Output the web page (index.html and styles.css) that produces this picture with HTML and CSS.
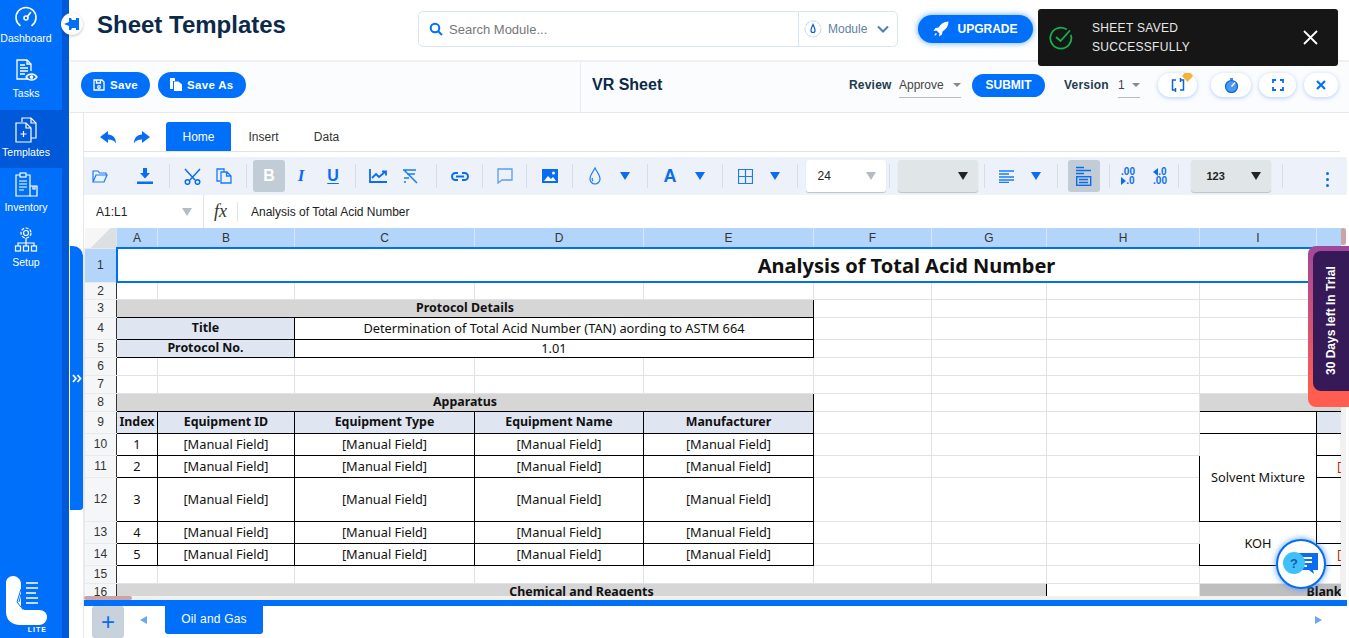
FILE: index.html
```html
<!DOCTYPE html>
<html lang="en">
<head>
    <meta charset="UTF-8">
    <title>Sheet Templates</title>
    <link rel="stylesheet" href="styles.css">
</head>
<body>
<div class="app">
    <nav class="side">
        <a class="nav-item">
            <svg width="24" height="24" viewBox="0 0 24 24" fill="none" stroke="#fff" stroke-width="1.6" stroke-linecap="round"><path d="M6 20.5A10 10 0 1 1 18 20.5"/><circle cx="12" cy="13" r="2"/><path d="M13.5 11.5L16.5 7.5"/></svg>
            <span>Dashboard</span>
        </a>
        <a class="nav-item">
            <svg width="26" height="26" viewBox="0 0 26 26" fill="none" stroke="#fff" stroke-width="1.3"><path d="M15 21H4V2h10l4 4v7"/><path d="M14 2v4h4M7 7h5M7 10h8M7 13h8M7 16h5"/><path d="M13 19c3-4 8-4 11 0-3 4-8 4-11 0z"/><circle cx="18.5" cy="19" r="1.2" fill="#fff"/></svg>
            <span>Tasks</span>
        </a>
        <a class="nav-item active">
            <svg width="26" height="26" viewBox="0 0 26 26" fill="none" stroke="#fff" stroke-width="1.2"><path d="M9 5V1h9l5 5v15h-5"/><path d="M18 1v5h5"/><path d="M3 6h10l5 5v14H3z"/><path d="M13 6v5h5M10.500 14v6M7.500 17h6"/></svg>
            <span>Templates</span>
        </a>
        <a class="nav-item">
            <svg width="26" height="26" viewBox="0 0 26 26" fill="none" stroke="#fff" stroke-width="1.2"><path d="M7 3H3v21h14V3h-4"/><rect x="7" y="1" width="6" height="4"/><path d="M6 9h8M6 12h8M6 15h8M6 18h5"/><path d="M17 14h7v10h-7M20 14v3h2v-3"/></svg>
            <span>Inventory</span>
        </a>
        <a class="nav-item">
            <svg width="26" height="26" viewBox="0 0 26 26" fill="none" stroke="#fff" stroke-width="1.2"><circle cx="13" cy="6" r="2.500"/><circle cx="13" cy="6" r="5" stroke-dasharray="3 1.500"/><path d="M13 11v5M5 19v-3h16v3M13 16v3"/><rect x="2.500" y="19" width="5" height="5"/><rect x="10.500" y="19" width="5" height="5"/><rect x="18.500" y="19" width="5" height="5"/></svg>
            <span>Setup</span>
        </a>
        <div class="logo">
            <svg width="42" height="50" viewBox="0 0 42 50"><path d="M7 0C11 0 15 3 15 8V30C15 33 17 34 20 34H33C38 34 41 37 41 41S38 49 33 49H14C6 49 0 44 0 36V7C0 3 3 0 7 0z" fill="#fff"/><g stroke="#fff" stroke-width="1.600"><path d="M20 7H32M20 12H32M20 17H30M20 22H32M20 27H32"/></g><path d="M15 13L11 26 15 31M15 18L13 26" stroke="#0070fb" stroke-width="1" fill="none"/></svg>
            <span>LITE</span>
        </div>
    </nav>

    <main class="main">
        <button class="pin">
            <svg width="16" height="14" viewBox="0 0 16 14" fill="#0070fb"><path d="M0 7L5 5V1H7L8 3H12V1H15V13H12V11H8L7 13H5V9z"/></svg>
        </button>

        <header class="topbar">
            <h1>Sheet Templates</h1>
            <div class="search">
                <svg width="14" height="14" viewBox="0 0 14 14" fill="none" stroke="#0070fb" stroke-width="2"><circle cx="6" cy="6" r="4.300"/><path d="M9 9l4 4"/></svg>
                <span class="search-text">Search Module...</span>
                <div class="module">
                    <svg width="18" height="18" viewBox="0 0 18 18" fill="none"><circle cx="9" cy="9" r="8" stroke="#c3d7ef" stroke-dasharray="6 1"/><path d="M9 4.500C8 7 7 8.500 7 10.500a2 2 0 0 0 4 0C11 8.500 10 7 9 4.500z" stroke="#0a5fc4" stroke-width="1.200"/></svg>
                    <span>Module</span>
                    <svg width="12" height="8" viewBox="0 0 12 8" fill="none" stroke="#4b7fae" stroke-width="2"><path d="M1 1.500l5 5 5-5"/></svg>
                </div>
            </div>
            <button class="upgrade">
                <svg width="16" height="16" viewBox="0 0 16 16" fill="#fff"><path d="M15.500.500C11 .500 8 2.500 5.500 6.500L2.500 7 .5 10l3-.5 3 3-.5 3 3-2 .5-3c4-2.500 6-5.500 6-10zM3 12c-1 .5-1.500 2-1.500 2.500S3.500 14 4 13z"/></svg>
                UPGRADE
            </button>
        </header>

        <section class="actions">
            <div class="actions-left">
                <button class="btn">
                    <svg width="12" height="12" viewBox="0 0 12 12" fill="none" stroke="#fff" stroke-width="1.300"><path d="M1 1h8l2 2v8H1z"/><path d="M3.500 1v3h4V1"/><circle cx="6" cy="8" r="1.300"/></svg>
                    Save
                </button>
                <button class="btn">
                    <svg width="12" height="13" viewBox="0 0 12 13" fill="#fff"><path d="M0 0h5v3H3v8H0z"/><path d="M4 3.500h4.500L12 6.500V13H4z"/></svg>
                    Save As
                </button>
            </div>
            <div class="actions-right">
                <h2>VR Sheet</h2>
                <span class="field-label review-label">Review</span>
                <div class="mini-select approve">Approve<i class="caret"></i></div>
                <button class="submit">SUBMIT</button>
                <span class="field-label version-label">Version</span>
                <div class="mini-select version">1<i class="caret"></i></div>
                <button class="pill pill-compare">
                    <svg width="14" height="14" viewBox="0 0 14 14" fill="none" stroke="#0a63d8" stroke-width="1.500"><path d="M5 2H1.500v10H4M9 12h3.500V2H10M9.500 0v4M4.500 10v4"/></svg>
                    <svg class="gem" width="11" height="9" viewBox="0 0 11 9" fill="#f5b335"><path d="M2.500 0h6L11 3 5.500 9 0 3z"/></svg>
                </button>
                <button class="pill pill-timer">
                    <svg width="15" height="15" viewBox="0 0 15 15"><circle cx="7.500" cy="8.500" r="6" fill="#4a97f0" stroke="#0a63d8" stroke-width="1.200"/><path d="M7.500 8.500L11 4.500" stroke="#fff" stroke-width="1.300"/><path d="M6 1h3" stroke="#0a63d8" stroke-width="1.500"/></svg>
                </button>
                <button class="pill pill-full">
                    <svg width="12" height="12" viewBox="0 0 12 12" fill="none" stroke="#0070fb" stroke-width="1.800"><path d="M1 4V1h3M8 1h3v3M11 8v3H8M4 11H1V8"/></svg>
                </button>
                <button class="pill pill-close">
                    <svg width="10" height="10" viewBox="0 0 10 10" stroke="#0070fb" stroke-width="2.200"><path d="M1 1l8 8M9 1L1 9"/></svg>
                </button>
            </div>
        </section>

        <section class="workbook">
            <div class="pull-tab">
                <svg width="10" height="9" viewBox="0 0 10 9" fill="none" stroke="#fff" stroke-width="1.800"><path d="M1 1l3 3.500L1 8M5.500 1l3 3.500L5.500 8"/></svg>
            </div>
            <div class="sheet">
                <div class="ribbon-tabs">
                    <svg class="undo" width="18" height="13" viewBox="0 0 18 13" fill="#0a6cf0"><path d="M8 0L0 6l8 6V8.500c4 0 6.500 1 8 4 0-6-3-8.500-8-9z"/></svg>
                    <svg class="redo" width="18" height="13" viewBox="0 0 18 13" fill="#0a6cf0"><path d="M10 0l8 6-8 6V8.500c-4 0-6.500 1-8 4 0-6 3-8.500 8-9z"/></svg>
                    <div class="rtab on">Home</div>
                    <div class="rtab">Insert</div>
                    <div class="rtab">Data</div>
                </div>

                <div class="toolbar">
                    <div class="group g-file">
                        <span class="tool gap-r"><svg width="16" height="13" viewBox="0 0 16 13" fill="none" stroke="#1a7bf5" stroke-width="1.200"><path d="M1 12V1h5l1.500 2H14v2M1 12h11l3-7H4z"/></svg></span>
                        <span class="tool"><svg width="16" height="16" viewBox="0 0 16 16" fill="#0a6cf0"><path d="M6 0h4v5h3L8 10.500 3 5h3zM0 13.500h16V16H0z"/></svg></span>
                    </div>
                    <div class="group g-edit">
                        <span class="tool"><svg width="17" height="17" viewBox="0 0 17 17" fill="none" stroke="#0a6cf0" stroke-width="1.500"><path d="M1 1l10 11M16 1L6 12"/><circle cx="3.500" cy="14" r="2.300"/><circle cx="13.500" cy="14" r="2.300"/></svg></span>
                        <span class="tool"><svg width="16" height="16" viewBox="0 0 16 16" fill="none" stroke="#1a7bf5" stroke-width="1.300"><path d="M4 13H1V1h7v3"/><path d="M5 4h6l4 4v7H5zM10.500 4v4H15"/></svg></span>
                    </div>
                    <div class="group g-font">
                        <span class="tool tool-on glyph-b">B</span>
                        <span class="tool glyph-i">I</span>
                        <span class="tool glyph-u">U</span>
                    </div>
                    <div class="group g-chart">
                        <span class="tool"><svg width="18" height="14" viewBox="0 0 18 14" fill="none" stroke="#0a6cf0" stroke-width="1.800"><path d="M1 0v13h17"/><path d="M3 9l4-4 3 3 6-5"/><path d="M13 2.500h4v4"/></svg></span>
                        <span class="tool"><svg width="16" height="15" viewBox="0 0 16 15" fill="none" stroke="#1a7bf5" stroke-width="1.500"><path d="M1 1h13M5 5h8M2 9h5M2 13h2M2 1l13 13"/></svg></span>
                    </div>
                    <div class="group g-one">
                        <span class="tool"><svg width="18" height="9" viewBox="0 0 18 9" fill="none" stroke="#0a6cf0" stroke-width="2"><path d="M7 1H4.500a3.500 3.500 0 0 0 0 7H7M11 1h2.500a3.500 3.500 0 0 1 0 7H11M5 4.500h8"/></svg></span>
                    </div>
                    <div class="group g-two">
                        <span class="tool"><svg width="16" height="16" viewBox="0 0 16 16" fill="none" stroke="#5b9cf5" stroke-width="1.300"><path d="M1 1h14v11H5l-4 3z"/></svg></span>
                    </div>
                    <div class="group g-one">
                        <span class="tool"><svg width="16" height="14" viewBox="0 0 16 14" fill="#0a6cf0"><path d="M0 0h16v14H0z"/><circle cx="11.500" cy="4" r="1.500" fill="#fff"/><path d="M2 12l4-5 3 3 2-2 3 4z" fill="#fff"/></svg></span>
                    </div>
                    <div class="group g-pick">
                        <span class="tool tool-n"><svg width="12" height="18" viewBox="0 0 12 18" fill="none" stroke="#1a7bf5" stroke-width="1.200"><path d="M6 1C4 5 1 8 1 12a5 5 0 0 0 10 0C11 8 8 5 6 1zM4 14c-1-1-1-2-.5-3"/></svg></span>
                        <span class="tool tool-n"><i class="arrow blue"></i></span>
                    </div>
                    <div class="group g-pick">
                        <span class="tool tool-n glyph-a">A</span>
                        <span class="tool tool-n"><i class="arrow blue"></i></span>
                    </div>
                    <div class="group g-pick">
                        <span class="tool tool-n"><svg width="15" height="15" viewBox="0 0 15 15" fill="none" stroke="#1a7bf5" stroke-width="1.200"><path d="M.5.500h14v14H.5zM7.500.500v14M.5 7.500h14"/></svg></span>
                        <span class="tool tool-n"><i class="arrow blue"></i></span>
                    </div>
                    <div class="group g-size">
                        <div class="select select-white">24<i class="arrow pale"></i></div>
                    </div>
                    <div class="group g-family">
                        <div class="select select-grey"><i class="arrow dark"></i></div>
                    </div>
                    <div class="group g-align">
                        <span class="tool tool-n"><svg width="15" height="13" viewBox="0 0 15 13" stroke="#1a7bf5" stroke-width="1.400"><path d="M0 1h15M0 4h10M0 7h15M0 10h15M0 12.500h10"/></svg></span>
                        <span class="tool tool-n"><i class="arrow blue"></i></span>
                    </div>
                    <div class="group g-wrap">
                        <span class="tool tool-on"><svg width="16" height="20" viewBox="0 0 16 20" fill="none" stroke="#0a6cf0" stroke-width="1.400"><path d="M0 1.500h8M0 4.500h15M0 7.500h8"/><rect x=".7" y="10.700" width="14" height="8.600"/><path d="M3 13.500h9M3 16.500h9"/></svg></span>
                    </div>
                    <div class="group g-dec">
                        <span class="tool tool-d"><b class="dec-text">.00</b><b class="dec-text"><i class="tri-r"></i>.0</b></span>
                        <span class="tool tool-d"><b class="dec-text"><i class="tri-l"></i>.0</b><b class="dec-text">.00</b></span>
                    </div>
                    <div class="group g-num">
                        <div class="select select-grey num">123<i class="arrow dark"></i></div>
                    </div>
                    <div class="more"><i></i><i></i><i></i></div>
                </div>

                <div class="formula">
                    <div class="namebox">A1:L1<i class="arrow pale"></i></div>
                    <div class="fx">fx</div>
                    <div class="formula-text">Analysis of Total Acid Number</div>
                </div>

                <div class="grid-wrap">
                    <table class="grid">
                        <colgroup>
                            <col class="c-idx"><col class="c-a"><col class="c-b"><col class="c-c"><col class="c-d"><col class="c-e"><col class="c-f"><col class="c-g"><col class="c-h"><col class="c-i"><col class="c-j"><col class="c-k"><col class="c-l">
                        </colgroup>
                        <tr class="h-head">
                            <th class="corner"></th><th>A</th><th>B</th><th>C</th><th>D</th><th>E</th><th>F</th><th>G</th><th>H</th><th>I</th><th></th><th></th><th></th>
                        </tr>
                        <tr class="h-34">
                            <th class="row-on">1</th><td class="sel" colspan="12">Analysis of Total Acid Number</td>
                        </tr>
                        <tr class="h-17"><th>2</th><td></td><td></td><td></td><td></td><td></td><td></td><td></td><td></td><td></td><td></td><td></td><td></td></tr>
                        <tr class="h-18">
                            <th>3</th><td class="b grey" colspan="5">Protocol Details</td><td></td><td></td><td></td><td></td><td></td><td></td><td></td>
                        </tr>
                        <tr class="h-22">
                            <th>4</th><td class="b pale-blue" colspan="2">Title</td><td class="k" colspan="3">Determination of Total Acid Number (TAN) aording to ASTM 664</td><td></td><td></td><td></td><td></td><td></td><td></td><td></td>
                        </tr>
                        <tr class="h-18">
                            <th>5</th><td class="b pale-blue" colspan="2">Protocol No.</td><td class="k" colspan="3">1.01</td><td></td><td></td><td></td><td></td><td></td><td></td><td></td>
                        </tr>
                        <tr class="h-18"><th>6</th><td></td><td></td><td></td><td></td><td></td><td></td><td></td><td></td><td></td><td></td><td></td><td></td></tr>
                        <tr class="h-18"><th>7</th><td></td><td></td><td></td><td></td><td></td><td></td><td></td><td></td><td></td><td></td><td></td><td></td></tr>
                        <tr class="h-18">
                            <th>8</th><td class="b grey" colspan="5">Apparatus</td><td></td><td></td><td></td><td class="b grey" colspan="4"></td>
                        </tr>
                        <tr class="h-22">
                            <th>9</th><td class="b pale-blue">Index</td><td class="b pale-blue">Equipment ID</td><td class="b pale-blue">Equipment Type</td><td class="b pale-blue">Equipment Name</td><td class="b pale-blue">Manufacturer</td><td></td><td></td><td></td><td class="k"></td><td class="k pale-blue"></td><td></td><td></td>
                        </tr>
                        <tr class="h-22">
                            <th>10</th><td class="k">1</td><td class="k">[Manual Field]</td><td class="k">[Manual Field]</td><td class="k">[Manual Field]</td><td class="k">[Manual Field]</td><td></td><td></td><td></td><td class="k" rowspan="3">Solvent Mixture</td><td class="k"></td><td></td><td></td>
                        </tr>
                        <tr class="h-22">
                            <th>11</th><td class="k">2</td><td class="k">[Manual Field]</td><td class="k">[Manual Field]</td><td class="k">[Manual Field]</td><td class="k">[Manual Field]</td><td></td><td></td><td></td><td class="k red">[Manual Field]</td><td></td><td></td>
                        </tr>
                        <tr class="h-44">
                            <th>12</th><td class="k">3</td><td class="k">[Manual Field]</td><td class="k">[Manual Field]</td><td class="k">[Manual Field]</td><td class="k">[Manual Field]</td><td></td><td></td><td></td><td class="k"></td><td></td><td></td>
                        </tr>
                        <tr class="h-22">
                            <th>13</th><td class="k">4</td><td class="k">[Manual Field]</td><td class="k">[Manual Field]</td><td class="k">[Manual Field]</td><td class="k">[Manual Field]</td><td></td><td></td><td></td><td class="k" rowspan="2">KOH</td><td class="k"></td><td></td><td></td>
                        </tr>
                        <tr class="h-22">
                            <th>14</th><td class="k">5</td><td class="k">[Manual Field]</td><td class="k">[Manual Field]</td><td class="k">[Manual Field]</td><td class="k">[Manual Field]</td><td></td><td></td><td></td><td class="k red">[Manual Field]</td><td></td><td></td>
                        </tr>
                        <tr class="h-18"><th>15</th><td></td><td></td><td></td><td></td><td></td><td></td><td></td><td></td><td></td><td></td><td></td><td></td></tr>
                        <tr class="h-18">
                            <th>16</th><td class="b grey" colspan="7">Chemical and Reagents</td><td></td><td class="b darker" colspan="2">Blank</td><td></td><td></td>
                        </tr>
                    </table>
                </div>
                <div class="hscroll"><i></i></div>

                <div class="sheet-tabs">
                    <button class="add">+</button>
                    <i class="tri-left"></i>
                    <div class="sheet-tab">Oil and Gas</div>
                    <i class="tri-right"></i>
                </div>
            </div>
            <div class="vscroll"><i></i></div>
        </section>

        <aside class="toast">
            <svg width="24" height="24" viewBox="0 0 24 24" fill="none" stroke="#12b24c" stroke-width="1.800" stroke-linecap="round"><path d="M22 9.500A10.500 10.500 0 1 1 17 3"/><path d="M7.500 11.500l4 3.500 9-10"/></svg>
            <p>SHEET SAVED<br>SUCCESSFULLY</p>
            <svg class="toast-x" width="15" height="15" viewBox="0 0 15 15" stroke="#fff" stroke-width="1.800"><path d="M1 1l13 13M14 1L1 14"/></svg>
        </aside>

        <aside class="trial"><span>30 Days left In Trial</span></aside>

        <button class="chat">
            <svg width="38" height="28" viewBox="0 0 38 28"><path d="M14 3h22v17h-5l1 4-5-4H14z" fill="#0a6cf0"/><path d="M17 8h13M17 12h13M17 16h8" stroke="#fff" stroke-width="2"/><circle cx="12" cy="13" r="11" fill="#3fc0fb"/><text x="12" y="17.500" class="chat-q">?</text></svg>
        </button>
    </main>
</div>
</body>
</html>
```

FILE: styles.css
```css
* {
    box-sizing: border-box;
}
body {
    margin: 0;
    font-family: "Liberation Sans", Arial, sans-serif;
    background: #fff;
    overflow: hidden;
}
button {
    font-family: inherit;
    border: 0;
    padding: 0;
    cursor: pointer;
}
.app {
    display: flex;
    width: 1349px;
    height: 638px;
    overflow: hidden;
}

/* sidebar */
.side {
    flex: 0 0 69px;
    display: flex;
    flex-direction: column;
    background: #0070fb;
    border-right: 7px solid #0059d8;
}
.nav-item {
    height: 55px;
    display: flex;
    flex-direction: column;
    align-items: center;
    justify-content: flex-end;
    gap: 3px;
    padding: 0 10px 10px 0;
    color: #fff;
    font-size: 10.500px;
    white-space: nowrap;
}
.nav-item:nth-child(-n+2) {
    padding-bottom: 11px;
}
.nav-item.active {
    height: 58px;
    background: #0059d8;
}
.logo {
    margin-top: auto;
    margin-bottom: 3px;
    margin-left: 6px;
    display: flex;
    flex-direction: column;
    position: relative;
    height: 59px;
}
.logo span {
    align-self: flex-end;
    margin-right: 15px;
    color: #fff;
    font-size: 7px;
    font-weight: bold;
    letter-spacing: 1px;
}

/* main column */
.main {
    flex: 1;
    min-width: 0;
    display: flex;
    flex-direction: column;
    position: relative;
}
.pin {
    position: absolute;
    left: -8px;
    top: 13px;
    width: 22px;
    height: 22px;
    border-radius: 50%;
    background: #fff;
    box-shadow: 0 1px 3px rgba(0, 0, 0, .25);
    display: flex;
    align-items: center;
    justify-content: center;
    z-index: 3;
}
.topbar {
    height: 60px;
    flex: none;
    display: flex;
    align-items: flex-start;
    padding-left: 28px;
}
.topbar h1 {
    margin: 11px 0 0;
    width: 321px;
    font-size: 24px;
    line-height: 28px;
    color: #0b2a4a;
}
.search {
    margin-top: 11px;
    width: 480px;
    height: 36px;
    display: flex;
    align-items: center;
    border: 1px solid #d8e5f7;
    border-radius: 5px;
    padding-left: 10px;
}
.search-text {
    flex: 1;
    margin-left: 6px;
    color: #777;
    font-size: 13px;
}
.module {
    width: 99px;
    height: 100%;
    display: flex;
    align-items: center;
    gap: 6px;
    padding-left: 5px;
    border-left: 1px solid #d8e5f7;
    color: #5d82a6;
    font-size: 12px;
}
.module span {
    margin-right: 4px;
}
.upgrade {
    margin: 15px 0 0 20px;
    width: 115px;
    height: 28px;
    display: flex;
    align-items: center;
    justify-content: center;
    gap: 8px;
    border-radius: 14px;
    background: #0070fb;
    color: #fff;
    font-size: 12px;
    font-weight: bold;
    box-shadow: 0 0 6px #5aa5ff;
}

/* save bar */
.actions {
    height: 53px;
    flex: none;
    display: flex;
    margin-left: 1px;
    border-top: 2px solid #eef0f4;
    border-bottom: 1px solid #e6e8ee;
    background: #fbfcfd;
}
.actions-left {
    width: 511px;
    display: flex;
    align-items: center;
    gap: 8px;
    padding: 0 0 5px 11px;
    border-right: 1px solid #e6ecf4;
}
.btn {
    height: 26px;
    padding: 0 12px 0 12px;
    display: flex;
    align-items: center;
    gap: 5px;
    border-radius: 13px;
    background: #0070fb;
    color: #fff;
    font-size: 11.500px;
    font-weight: bold;
    letter-spacing: .3px;
}
.actions-right {
    flex: 1;
    display: flex;
    align-items: center;
    padding: 0 0 4px 11px;
    position: relative;
}
.actions-right h2 {
    margin: 0;
    width: 257px;
    font-size: 16px;
    color: #0b2a4a;
}
.field-label {
    font-size: 12px;
    font-weight: bold;
    color: #253a50;
    letter-spacing: .2px;
}
.review-label {
    width: 50px;
}
.mini-select {
    height: 26px;
    display: flex;
    align-items: center;
    justify-content: space-between;
    border-bottom: 1px solid #bbb;
    font-size: 12px;
    color: #444;
}
.approve {
    width: 62px;
}
.caret {
    width: 0;
    height: 0;
    border: 4px solid transparent;
    border-top: 4px solid #888;
    border-bottom: 0;
}
.submit {
    margin-left: 11px;
    width: 73px;
    height: 23px;
    border-radius: 12px;
    background: #0070fb;
    color: #fff;
    font-size: 12px;
    font-weight: bold;
}
.version-label {
    margin-left: 19px;
    width: 54px;
}
.version {
    width: 22px;
}
.pill {
    height: 24px;
    margin-left: 8px;
    display: flex;
    align-items: center;
    justify-content: center;
    border-radius: 12px;
    background: #fff;
    box-shadow: 0 1px 4px rgba(40, 120, 240, .35);
    position: relative;
}
.pill-compare {
    width: 39px;
    margin-left: 18px;
}
.pill-timer {
    width: 40px;
    margin-left: 14px;
}
.pill-full {
    width: 37px;
}
.pill-close {
    width: 34px;
}
.gem {
    position: absolute;
    right: 4px;
    top: 0;
}

/* workbook */
.workbook {
    flex: 1;
    min-height: 0;
    display: flex;
    padding-left: 15px;
    position: relative;
}
.pull-tab {
    position: absolute;
    left: 1px;
    top: 133px;
    width: 13px;
    height: 264px;
    background: #0070fb;
    border-radius: 0 10px 3px 0;
    display: flex;
    align-items: center;
    justify-content: center;
}
.sheet {
    width: 1257px;
    flex: none;
    display: flex;
    flex-direction: column;
    border-left: 1px solid #e6e8ee;
    margin-left: -1px;
}
.ribbon-tabs {
    height: 39px;
    flex: none;
    display: flex;
    align-items: flex-end;
    border-bottom: 1px solid #dfe3ea;
    padding-left: 16px;
}
.undo {
    margin: 0 14px 7px 0;
}
.redo {
    margin: 0 16px 7px 0;
}
.rtab {
    width: 63px;
    height: 29px;
    display: flex;
    align-items: center;
    justify-content: center;
    font-size: 12px;
    color: #333;
}
.rtab.on {
    width: 65px;
    background: #0070fb;
    color: #fff;
    border-radius: 3px 3px 0 0;
    margin-right: 1px;
}
.toolbar {
    height: 38px;
    margin-top: 5px;
    flex: none;
    display: flex;
    align-items: center;
    width: 1263px;
    background: #ecf1fa;
}
.group {
    height: 24px;
    flex: none;
    display: flex;
    align-items: center;
    justify-content: center;
    border-right: 1px solid #d8dde5;
}
.g-file { width: 86px; padding-right: 9px; }
.g-edit { width: 77px; }
.g-font { width: 109px; }
.g-chart { width: 81px; padding-right: 4px; }
.g-one { width: 46px; }
.g-two { width: 44px; }
.g-pick { width: 75px; }
.g-size { width: 92px; padding-left: 4px; }
.g-family { width: 95px; padding-left: 2px; }
.g-align { width: 73px; }
.g-wrap { width: 52px; }
.g-dec { width: 69px; }
.g-num { width: 104px; }
.tool {
    width: 32px;
    height: 32px;
    flex: none;
    display: flex;
    align-items: center;
    justify-content: center;
    color: #0a6cf0;
    font-size: 16px;
    font-weight: bold;
}
.tool-n {
    width: 30px;
}
.gap-r {
    margin-right: 13px;
}
.tool-on {
    background: #c1ccd6;
    border-radius: 3px;
}
.glyph-b {
    color: #fff;
}
.glyph-i {
    font-family: "Liberation Serif", serif;
    font-style: italic;
    font-size: 17px;
}
.glyph-u {
    text-decoration: underline;
    text-underline-offset: 2px;
}
.glyph-a {
    font-size: 18px;
}
.tool-d {
    flex-direction: column;
    gap: 0;
}
.dec-text {
    font-size: 10px;
    line-height: 9px;
    display: flex;
    align-items: center;
}
.tri-r, .tri-l {
    width: 0;
    height: 0;
    border: 4px solid transparent;
}
.tri-r {
    border-left: 5px solid #0a6cf0;
    border-right: 0;
}
.tri-l {
    border-right: 5px solid #0a6cf0;
    border-left: 0;
}
.arrow {
    width: 0;
    height: 0;
    border-left: 5px solid transparent;
    border-right: 5px solid transparent;
    border-top: 8px solid;
}
.arrow.blue { color: #0a6cf0; }
.arrow.pale { color: #b5bcc4; }
.arrow.dark { color: #222; }
.select {
    width: 80px;
    height: 32px;
    flex: none;
    display: flex;
    align-items: center;
    justify-content: space-between;
    padding: 0 10px 0 12px;
    border-radius: 3px;
    font-size: 12px;
    color: #222;
    box-shadow: 0 1px 1px rgba(0, 0, 0, .2);
}
.select-white {
    background: #fff;
}
.select-grey {
    background: #e0e5e8;
    justify-content: flex-end;
}
.num {
    justify-content: space-between;
    padding-left: 16px;
    font-size: 11px;
    font-weight: bold;
}
.more {
    margin-left: 43px;
    display: flex;
    flex-direction: column;
    gap: 3px;
    padding-top: 6px;
}
.more i {
    width: 3px;
    height: 3px;
    border-radius: 50%;
    background: #0a6cf0;
}
.formula {
    height: 33px;
    flex: none;
    display: flex;
    align-items: center;
    width: 1263px;
    background: #fff;
}
.namebox {
    width: 120px;
    height: 100%;
    display: flex;
    align-items: center;
    justify-content: space-between;
    padding: 0 11px 0 12px;
    border-right: 1px solid #dfe3ea;
    font-size: 12px;
    color: #222;
}
.fx {
    width: 34px;
    height: 20px;
    border-right: 1px solid #dfe3ea;
    text-align: center;
    font-family: "Liberation Serif", serif;
    font-style: italic;
    font-size: 18px;
    line-height: 18px;
    color: #333;
}
.formula-text {
    margin-left: 13px;
    font-size: 12px;
    color: #222;
}

/* grid */
.grid-wrap {
    flex: 1;
    min-height: 0;
    width: 1257px;
    overflow: hidden;
    position: relative;
}
.grid {
    table-layout: fixed;
    width: 1612px;
    border-collapse: collapse;
    font-family: "Noto Sans", sans-serif;
    font-size: 12.800px;
    color: #111;
}
.c-idx { width: 32px; }
.c-a { width: 41px; }
.c-b { width: 137px; }
.c-c { width: 180px; }
.c-d { width: 169px; }
.c-e { width: 170px; }
.c-f { width: 118px; }
.c-g { width: 115px; }
.c-h { width: 153px; }
.c-i { width: 117px; }
.c-j { width: 132px; }
.c-k { width: 100px; }
.c-l { width: 148px; }
.h-head { height: 20px; }
.h-17 { height: 17px; }
.h-18 { height: 18px; }
.h-22 { height: 22px; }
.h-34 { height: 34px; }
.h-44 { height: 44px; }
.grid th, .grid td {
    padding: 0;
    overflow: hidden;
    white-space: nowrap;
    text-align: center;
    line-height: 1;
}
.grid td {
    border: 1px solid #e0e2e8;
}
.grid th {
    font-family: "Liberation Sans", sans-serif;
    font-weight: normal;
    font-size: 12px;
    color: #333;
    background: #f5f6f8;
    border: 1px solid #e8eaee;
    border-right: 1px solid #333;
}
.h-head th {
    background: #b4d5fb;
    border: 0;
    border-right: 1px solid #d5e6fb;
}
.grid th.corner {
    background: linear-gradient(135deg, #f6f6f6 50%, #dde0e3 50%);
}
.grid th.row-on {
    background: #b4d5fb;
    border-right-color: #0070f0;
}
.grid td.sel {
    border: 2px solid #0070f0;
    padding-top: 2px;
    font-size: 20px;
    font-weight: bold;
}
.grid td.k, .grid td.b {
    border: 1px solid #000;
}
.grid td.b {
    font-size: 12.400px;
    font-weight: bold;
}
.grey {
    background: #d6d6d6;
}
.darker {
    background: #bebebe;
}
.pale-blue {
    background: #dfe6f1;
}
.grid td.red {
    color: #a33000;
    padding-right: 6px;
}
.hscroll {
    height: 4px;
    flex: none;
    background: #f1f1f1;
}
.hscroll i {
    display: block;
    width: 48px;
    height: 4px;
    border-radius: 2px;
    background: #c9a5a8;
}
.vscroll {
    width: 6px;
    height: 368px;
    margin-top: 115px;
    background: #f1f1f1;
}
.vscroll i {
    display: block;
    height: 17px;
    border-radius: 3px;
    background: #c9a5a8;
}

/* sheet tabs */
.sheet-tabs {
    height: 38px;
    flex: none;
    width: 1263px;
    display: flex;
    align-items: flex-start;
    border-top: 6px solid #0070fb;
    padding-left: 8px;
}
.add {
    width: 32px;
    height: 32px;
    background: #c8d2dc;
    border-radius: 3px;
    color: #0a6cf0;
    font-size: 24px;
    line-height: 30px;
}
.tri-left, .tri-right {
    width: 0;
    height: 0;
    margin-top: 10px;
    border-top: 4px solid transparent;
    border-bottom: 4px solid transparent;
}
.tri-left {
    margin-left: 16px;
    border-right: 7px solid #6aa8f5;
}
.sheet-tab {
    margin-left: 18px;
    width: 98px;
    height: 28px;
    background: #0070fb;
    border-radius: 0 0 3px 3px;
    color: #fff;
    font-size: 12px;
    letter-spacing: .2px;
    line-height: 27px;
    text-align: center;
}
.tri-right {
    margin-left: auto;
    margin-right: 25px;
    border-left: 7px solid #6aa8f5;
}

/* overlays */
.toast {
    position: absolute;
    left: 969px;
    top: 9px;
    width: 300px;
    height: 57px;
    display: flex;
    align-items: center;
    padding-left: 11px;
    background: #161616;
    border-radius: 3px;
    color: #e8e8e8;
    font-size: 12px;
    letter-spacing: .3px;
    z-index: 4;
}
.toast p {
    margin: 0 0 0 19px;
    line-height: 19px;
}
.toast-x {
    margin-left: auto;
    margin-right: 20px;
}
.trial {
    position: absolute;
    left: 1239px;
    top: 246px;
    width: 41px;
    height: 161px;
    display: flex;
    padding: 5px 0 16px 5px;
    border-radius: 8px 0 0 8px;
    background: linear-gradient(#a0479c, #ff5d4f 90%);
    z-index: 3;
}
.trial span {
    flex: 1;
    display: flex;
    align-items: center;
    justify-content: center;
    background: #361a57;
    color: #fff;
    font-size: 12px;
    font-weight: bold;
    writing-mode: vertical-rl;
    transform: rotate(180deg);
    border-radius: 0 8px 8px 0;
}
.chat {
    position: absolute;
    left: 1207px;
    top: 539px;
    width: 50px;
    height: 50px;
    display: flex;
    align-items: center;
    justify-content: center;
    border: 2px solid #0a6cf0;
    border-radius: 50%;
    background: #fff;
    box-shadow: 0 0 6px #4a9bff;
    z-index: 3;
}
.chat-q {
    font-family: "Liberation Sans", sans-serif;
    font-size: 13px;
    font-weight: bold;
    fill: #1d5aa8;
    text-anchor: middle;
}
```
